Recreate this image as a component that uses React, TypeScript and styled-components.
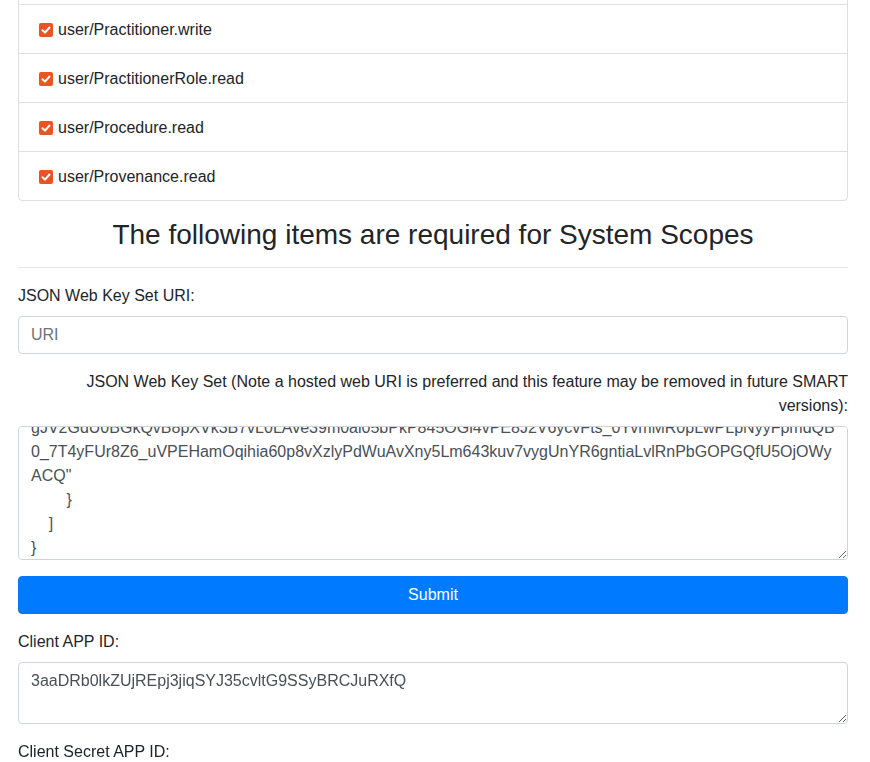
import React, { useLayoutEffect, useRef } from "react";
import styled, { createGlobalStyle } from "styled-components";

const GlobalStyle = createGlobalStyle`
  html, body { margin: 0; padding: 0; background: #fff; }
  body {
    font-family: "Liberation Sans", Arial, sans-serif;
    font-size: 16px;
    line-height: 1.5;
    color: #212529;
    overflow: hidden;
  }
  * { box-sizing: border-box; }
`;

const Page = styled.div`
  display: flex;
  flex-direction: column;
  padding: 0 22px 0 18px;
  margin-top: -46px;
`;

const ListCard = styled.ul`
  list-style: none;
  margin: 0;
  padding: 0;
  display: flex;
  flex-direction: column;
  border: 1px solid rgba(0, 0, 0, 0.125);
  border-radius: 4px;
`;

const ListRow = styled.li`
  display: flex;
  align-items: center;
  padding: 13px 20px 11px;
  height: 49px;
  border-top: ${(p: { $first?: boolean }) => (p.$first ? "none" : "1px solid rgba(0,0,0,0.125)")};
`;

const Check = styled.span`
  display: inline-flex;
  align-items: center;
  justify-content: center;
  width: 14px;
  height: 14px;
  border-radius: 2px;
  background: #e95420;
  margin-right: 5px;
  flex: none;
`;

const ScopeText = styled.span`
  font-size: 16px;
  line-height: 24px;
`;

const Heading = styled.h3`
  margin: 17px 0 0;
  font-size: 28px;
  font-weight: 500;
  line-height: 1.2;
  text-align: center;
`;

const Rule = styled.hr`
  margin: 15px 0 16px;
  border: 0;
  border-top: 1px solid rgba(0, 0, 0, 0.1);
`;

const Group = styled.div`
  display: flex;
  flex-direction: column;
  margin-bottom: 16px;
`;

const Label = styled.label<{ $right?: boolean }>`
  display: block;
  margin-bottom: 8px;
  line-height: 24px;
  text-align: ${(p) => (p.$right ? "right" : "left")};
`;

const fieldBase = `
  width: 100%;
  padding: 6px 12px;
  font-family: "Liberation Sans", Arial, sans-serif;
  font-size: 16px;
  line-height: 24px;
  color: #495057;
  background: #fff;
  border: 1px solid #ced4da;
  border-radius: 4px;
  outline: none;
`;

const Input = styled.input`
  ${fieldBase}
  height: 38px;
  &::placeholder { color: #6c757d; opacity: 1; }
`;

const Area = styled.textarea<{ $rows: number }>`
  ${fieldBase}
  display: block;
  height: ${(p) => p.$rows * 24 + 14}px;
  resize: vertical;
  scrollbar-width: none;
  &::-webkit-scrollbar { display: none; }
`;

const SubmitButton = styled.button`
  width: 100%;
  height: 38px;
  margin-bottom: 16px;
  border: 1px solid #007bff;
  border-radius: 4px;
  background: #007bff;
  color: #fff;
  font-family: "Liberation Sans", Arial, sans-serif;
  font-size: 16px;
  line-height: 24px;
`;

const CheckIcon = () => (
  <svg width="10" height="10" viewBox="0 0 10 10">
    <path d="M1.5 5.2 L4 7.6 L8.5 2.5" fill="none" stroke="#fff" strokeWidth="2" strokeLinecap="round" strokeLinejoin="round" />
  </svg>
);

const scopes = [
  "user/Practitioner.read",
  "user/Practitioner.write",
  "user/PractitionerRole.read",
  "user/Procedure.read",
  "user/Provenance.read",
];

const jwks = `{
    "keys": [
        {
            "kty": "RSA",
            "alg": "RS384",
            "e": "AQAB",
            "kid": "b4f6c3a1-7e2d-4c58-9a61-0f3e2b7d8c19",
            "n": "xR3pK7mQv2Lw9NbT4cYh8sJdFgA1ZoUeWiX6rPqV0tHyMnBl5kCaGjEuDfSoIz
tY2hNq8wLcVb6mPxR4sKdJ0eFgAiZoUlWn7rTyQp3vBxMh9cGjEuSaDfLkIz5tHqNwYbVm1pCrXe
gJV2GdU0BGkQvB8pXVk3B7vL0LAve39m0al05bPkP845OGl4vPE8J2V6ycvFts_0YvmMR0pLwPLpNyyFpmdQB
0_7T4yFUr8Z6_uVPEHamOqihia60p8vXzlyPdWuAvXny5Lm643kuv7vygUnYR6gntiaLvlRnPbGOPGQfU5OjOWy
ACQ"
        }
    ]
}`;

export default function App() {
  const keyRef = useRef<HTMLTextAreaElement>(null);
  useLayoutEffect(() => {
    const el = keyRef.current;
    if (el) el.scrollTop = el.scrollHeight - el.clientHeight - 7;
  }, []);

  return (
    <>
      <GlobalStyle />
      <Page>
        <ListCard>
          {scopes.map((s, i) => (
            <ListRow key={s} $first={i === 0}>
              <Check>
                <CheckIcon />
              </Check>
              <ScopeText>{s}</ScopeText>
            </ListRow>
          ))}
        </ListCard>
        <Heading>The following items are required for System Scopes</Heading>
        <Rule />
        <Group>
          <Label>JSON Web Key Set URI:</Label>
          <Input placeholder="URI" />
        </Group>
        <Group>
          <Label $right>
            JSON Web Key Set (Note a hosted web URI is preferred and this feature may be removed in future SMART versions):
          </Label>
          <Area ref={keyRef} $rows={5} defaultValue={jwks} />
        </Group>
        <SubmitButton>Submit</SubmitButton>
        <Group>
          <Label>Client APP ID:</Label>
          <Area $rows={2} defaultValue="3aaDRb0lkZUjREpj3jiqSYJ35cvltG9SSyBRCJuRXfQ" />
        </Group>
        <Group>
          <Label>Client Secret APP ID:</Label>
        </Group>
      </Page>
    </>
  );
}
